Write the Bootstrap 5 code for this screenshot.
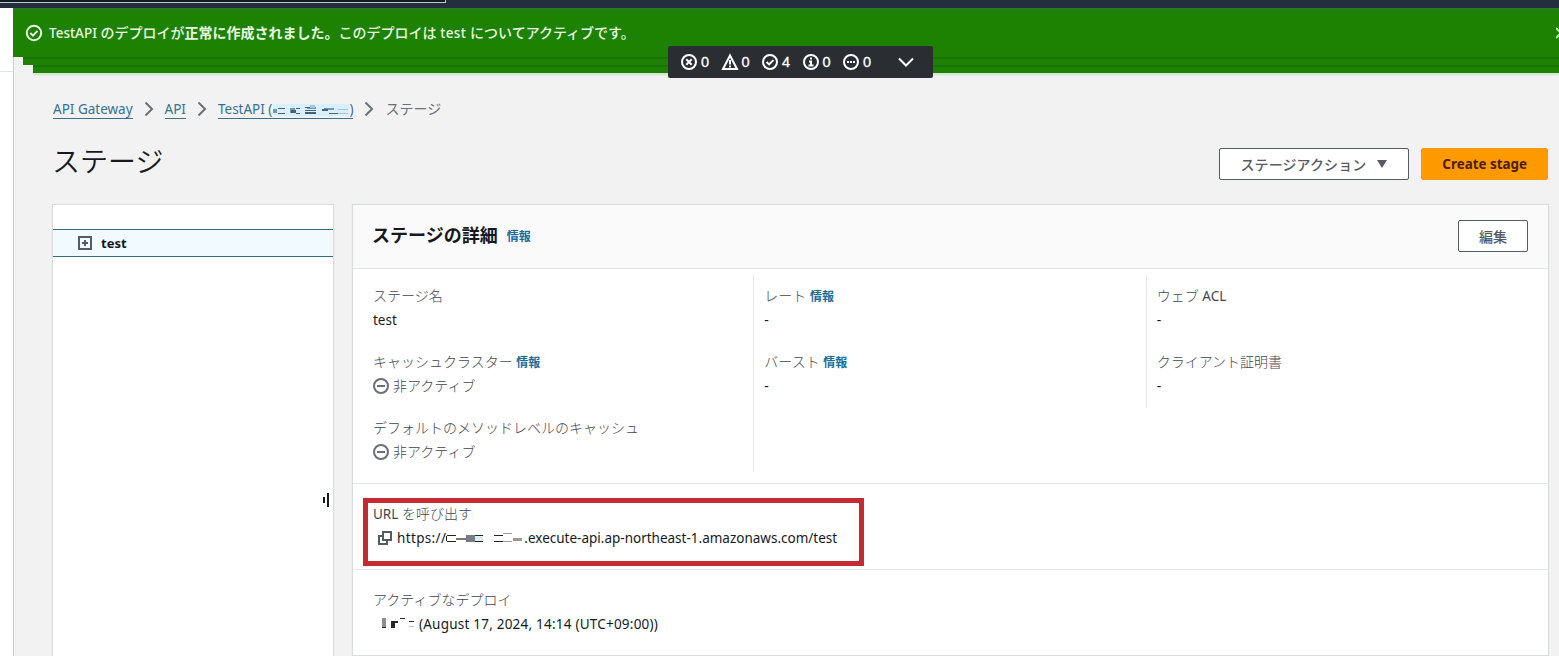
<!DOCTYPE html>
<html lang="ja">
<head>
<meta charset="utf-8">
<meta name="viewport" content="width=device-width, initial-scale=1">
<title>API Gateway - ステージ</title>
<link rel="stylesheet" href="https://cdn.jsdelivr.net/npm/bootstrap@5.3.0/dist/css/bootstrap.min.css">
<style>
body{font-family:"Noto Sans","Noto Sans CJK JP",sans-serif;font-size:14px;line-height:24px;color:#16191f;background:#f2f2f2;height:656px;overflow:hidden}
svg{display:block;flex:none}
.lt{font-size:13.5px}
.jp{font-family:"Noto Sans CJK JP",sans-serif}
.topbar{height:8px;background:#232f3e}
.search-edge{width:446px;height:3px;background:#131a24;border:solid #c3c7cb;border-width:0 1px 1px 0}
.rail{width:14px;background:#fff;border-right:1px solid #c9cccd}
.rail-head{height:64px;border-bottom:1px solid #e4e6e6}
.flash{height:49px;background:#1d8102;color:#e9f7e4;padding-left:12px;margin-left:-1px;border-top:1px solid #347336}
.flash-stack{height:8px;background:#1d8102;border-top:2px solid #187203}
.s1{margin-left:9px}.s2{margin-left:19px;box-shadow:0 2px 2px #cde3c8}
.counter{left:668px;top:46px;width:265px;height:32px;background:#2a2e33;border-radius:2px;color:#fff;padding-left:12px;font-size:14px}
.num{width:22.5px;padding-left:3px;font:14.5px/24px "Liberation Sans",sans-serif;letter-spacing:.5px;-webkit-text-stroke:.3px #fff}
.crumbs a{color:#37718f;text-decoration:none;border-bottom:1px solid #37718f;line-height:18px;height:19px}
.page-title{font-size:28px;line-height:36px;font-weight:350;margin:-8px 0 0 -1px}
.abtn{height:32px;border:1px solid #545b64;border-radius:2px;background:#fff;color:#545b64;padding:0 20px;line-height:28px;font-size:14px;font-weight:500;white-space:nowrap}
.abtn-main{background:#ff9900;border-color:#f39a12;color:#4c1d00;font-weight:700;font-size:13.4px;line-height:30px}
.panel{background:#fff;box-shadow:0 0 1px 1px #d9dcdc}
.details{height:450px;box-shadow:0 0 1px 1px #d9dcdc,0 1px #858b8d}
.tree{width:280px}
.tree-row{margin-top:24px;height:28px;border:solid #356c7d;border-width:1px 0;background:#f1faff;padding-left:25px}
.panel-head{height:64px;background:#fafafa;border-bottom:1px solid #e5e8e8;padding:0 20px}
.panel-head h2{font-size:18px;font-weight:700;line-height:24px;margin:0 0 0 -1px}
.info{font:700 12px/20px "Noto Sans CJK JP",sans-serif;color:#1b6d99;text-decoration:none}
.fields{margin:6px 11px 11px 10px}
.fields>div{padding:9px 10px 0;height:133px}
.fields>.first{height:197px;border-right:1px solid #e5e8e8}
.fields>.last{border-left:1px solid #e5e8e8}
.pair{margin-bottom:18px;height:48px}
.lbl,.off{color:#3f464f;font-weight:300}
.section{border-top:1px solid #e5e8e8;padding:18px 20px 0;height:86px}
.marker{left:10px;top:14px;width:501px;height:68px;border:5px solid #c42a31}
</style>
</head>
<body class="d-flex flex-column">
<header class="topbar flex-shrink-0"><div class="search-edge"></div></header>
<div class="d-flex flex-grow-1 position-relative" style="min-height:0">
  <aside class="rail flex-shrink-0"><div class="rail-head"></div></aside>
  <main class="flex-grow-1 d-flex flex-column" style="min-width:0">
    <div class="flash flex-shrink-0 d-flex align-items-center justify-content-between overflow-hidden">
      <div class="d-flex align-items-center">
        <svg width="18" height="18" viewBox="0 0 18 18" fill="none" stroke="#e9f7e4" stroke-width="2"><circle cx="9" cy="9" r="7.2"/><path d="M5.3 9l2.7 2.6 4.5-4.7"/></svg>
        <span style="margin-left:6px" class="text-nowrap fw-medium"><span class="lt">TestAPI </span>のデプロイが<b>正常に作成されました。</b>このデプロイは <span class="lt" style="letter-spacing:.35px">test </span>についてアクティブです。</span>
      </div>
      <svg width="3" height="16" viewBox="0 0 3 16" fill="none" stroke="#b9e8ab" stroke-width="2"><path d="M0 3l10 10M0 13L10 3"/></svg>
    </div>
    <div class="flash-stack s1 flex-shrink-0"></div>
    <div class="flash-stack s2 flex-shrink-0"></div>
    <div class="d-flex flex-column flex-grow-1" style="padding:24px 11px 0 39px;min-height:0">
      <nav class="crumbs d-flex align-items-center flex-shrink-0" style="height:24px">
        <a href="#" class="lt">API Gateway</a>
        <svg class="mx-2" width="16" height="16" viewBox="0 0 16 16" fill="none" stroke="#687078" stroke-width="2"><path d="M4.5 1.5L11 8l-6.5 6.5"/></svg>
        <a href="#" class="lt">API</a>
        <svg class="mx-2" width="16" height="16" viewBox="0 0 16 16" fill="none" stroke="#687078" stroke-width="2"><path d="M4.5 1.5L11 8l-6.5 6.5"/></svg>
        <a href="#" class="lt d-flex">TestAPI&nbsp;(<svg width="77" height="18" viewBox="-1 -1 77 18"><path fill="#d9effb" d="M0 3h76v12H0z"/><path fill="#6d9ab2" d="M0 8h4v4H0zM17 7h5v5h-5zM34 6h9v2h-9zM51 7h10v2H51z"/><path fill="#41647a" d="M5 7h7v1H5zM5 12h7v1H5zM18 9h5v3h-5zM23 7h4v1h-4zM23 12h4v1h-4zM32 9h11v1H32zM32 11h11v2H32zM32 6h5v1h-5zM49 8h6v2h-6zM56 12h9v1h-9z"/><path fill="#a4c5d6" d="M65 8h10v1H65zM65 12h10v1H65zM37 4h5v3h-5z"/></svg>)</a>
        <svg class="mx-2" width="16" height="16" viewBox="0 0 16 16" fill="none" stroke="#687078" stroke-width="2"><path d="M4.5 1.5L11 8l-6.5 6.5"/></svg>
        <span class="jp" style="color:#687078;padding-bottom:2px">ステージ</span>
      </nav>
      <div class="d-flex justify-content-between align-items-center flex-shrink-0" style="margin-top:23px;height:40px">
        <h1 class="page-title jp">ステージ</h1>
        <div class="d-flex" style="gap:12px">
          <button class="abtn jp d-flex align-items-center"><span style="letter-spacing:.1px">ステージアクション</span><svg width="12" height="10" viewBox="0 0 12 10" style="margin-left:10px"><path fill="#545b64" d="M1 1h10L6 9z"/></svg></button>
          <button class="abtn abtn-main">Create stage</button>
        </div>
      </div>
      <div class="d-flex flex-grow-1" style="margin-top:21px;gap:20px;min-height:0">
        <div class="tree panel flex-shrink-0 d-flex flex-column justify-content-between">
          <div class="tree-row d-flex align-items-center fw-bold">
            <svg width="14" height="14" viewBox="0 0 14 14" fill="none" stroke="#545b64" stroke-width="2"><path d="M1 1h12v12H1zM4 7h6M7 4v6"/></svg>
            <span style="margin-left:9px;font-size:13px">test</span>
          </div>
          <svg class="align-self-end" width="8" height="16" viewBox="0 0 8 16" style="margin:0 3px 148px 0"><path fill="#16191f" d="M1 5h2v6H1zM5 1h2v14H5z"/></svg>
        </div>
        <section class="panel details flex-grow-1 align-self-start">
          <div class="panel-head d-flex justify-content-between align-items-center">
            <div class="d-flex" style="padding-bottom:6px"><h2 class="jp">ステージの詳細</h2><a class="info" style="margin:4px 0 0 9px" href="#">情報</a></div>
            <button class="abtn jp" style="margin-bottom:2px">編集</button>
          </div>
          <div class="row g-0 fields">
            <div class="col-4 first">
              <div class="pair"><div class="lbl">ステージ名</div><div class="lt">test</div></div>
              <div class="pair"><div class="lbl">キャッシュクラスター <a class="info" href="#">情報</a></div>
                <div class="off d-flex align-items-center"><svg width="16" height="16" viewBox="0 0 16 16" fill="none" stroke="#687078" stroke-width="2"><circle cx="8" cy="8" r="7"/><path d="M4 8h8"/></svg><span style="margin-left:4px">非アクティブ</span></div></div>
              <div class="pair"><div class="lbl">デフォルトのメソッドレベルのキャッシュ</div>
                <div class="off d-flex align-items-center"><svg width="16" height="16" viewBox="0 0 16 16" fill="none" stroke="#687078" stroke-width="2"><circle cx="8" cy="8" r="7"/><path d="M4 8h8"/></svg><span style="margin-left:4px">非アクティブ</span></div></div>
            </div>
            <div class="col-4">
              <div class="pair"><div class="lbl">レート <a class="info" href="#">情報</a></div><div>-</div></div>
              <div class="pair"><div class="lbl">バースト <a class="info" href="#">情報</a></div><div>-</div></div>
            </div>
            <div class="col-4 last">
              <div class="pair"><div class="lbl">ウェブ <span class="lt fw-normal">ACL</span></div><div>-</div></div>
              <div class="pair"><div class="lbl">クライアント証明書</div><div>-</div></div>
            </div>
          </div>
          <div class="section position-relative">
            <div class="marker position-absolute"></div>
            <div class="lbl"><span class="lt fw-normal">URL</span> を呼び出す</div>
            <div class="d-flex align-items-center lt">
              <svg width="14" height="14" viewBox="0 0 14 14" fill="none" stroke="#545b64" stroke-width="2" style="margin:0 5px"><path d="M5 1h8v8H5zM5 5H1v8h8V9"/></svg>
              <span style="letter-spacing:.35px">https://</span>
              <svg width="78" height="18" viewBox="0 0 78 18"><path fill="#222" d="M1 6h9v1H1zM1 12h9v1H1zM0 7h1v5H0zM29 6h8v1h-8zM29 12h8v1h-8zM48 6h9v1h-9zM48 12h9v1h-9z"/><path fill="#7c786c" d="M10 9h10v2H10z"/><path fill="#777c86" d="M20 6h9v7h-9z"/><path fill="#d7f0fa" d="M29 7h8v5h-8z"/><path fill="#999" d="M57 4h9v1h-9zM57 12h9v1h-9zM67 9h9v3h-9z"/></svg>
              <span>.execute-api.ap-northeast-1.amazonaws.com/test</span>
            </div>
          </div>
          <div class="section">
            <div class="lbl">アクティブなデプロイ</div>
            <div class="d-flex align-items-center lt">
              <svg width="46" height="18" viewBox="0 0 46 18"><path fill="#8d8d94" d="M9 3h4v10H9z"/><path fill="#25252b" d="M9 12h4v1H9zM18 6h7v2h-7zM18 8h4v5h-4zM27 3h5v1h-5zM36 6h5v1h-5z"/><path fill="#bbb" d="M36 11h5v1h-5z"/></svg>
              <span style="letter-spacing:.22px">(August 17, 2024, 14:14 (UTC+09:00))</span>
            </div>
          </div>
        </section>
      </div>
    </div>
  </main>
</div>
<div class="counter position-absolute d-flex align-items-center">
  <svg width="18" height="18" viewBox="0 0 18 18" fill="none" stroke="#fff" stroke-width="2"><circle cx="9" cy="9" r="7"/><path d="M6.3 6.3l5.4 5.4M11.7 6.3l-5.4 5.4"/></svg><span class="num">0</span>
  <svg width="18" height="18" viewBox="0 0 18 18" fill="none" stroke="#fff" stroke-width="2"><path d="M9 2.5L16 16H2zM9 7v4.500M9 12.500v2"/></svg><span class="num">0</span>
  <svg width="18" height="18" viewBox="0 0 18 18" fill="none" stroke="#fff" stroke-width="2"><circle cx="9" cy="9" r="7"/><path d="M5.5 9l2.6 2.4 4.300-4.300"/></svg><span class="num">4</span>
  <svg width="18" height="18" viewBox="0 0 18 18" fill="none" stroke="#fff" stroke-width="2"><circle cx="9" cy="9" r="7"/><path d="M9 4.500v2M7 8.500h2v4M6.500 12.500h5"/></svg><span class="num">0</span>
  <svg width="18" height="18" viewBox="0 0 18 18" fill="none" stroke="#fff" stroke-width="2"><circle cx="9" cy="9" r="7"/><path d="M5 9h2M8 9h2M11 9h2"/></svg><span class="num">0</span>
  <svg width="16" height="16" viewBox="0 0 16 16" fill="none" stroke="#fff" stroke-width="2" style="margin-left:15px"><path d="M1 4.500l7 7 7-7"/></svg>
</div>
<script src="https://cdn.jsdelivr.net/npm/bootstrap@5.3.0/dist/js/bootstrap.bundle.min.js"></script>
</body>
</html>
